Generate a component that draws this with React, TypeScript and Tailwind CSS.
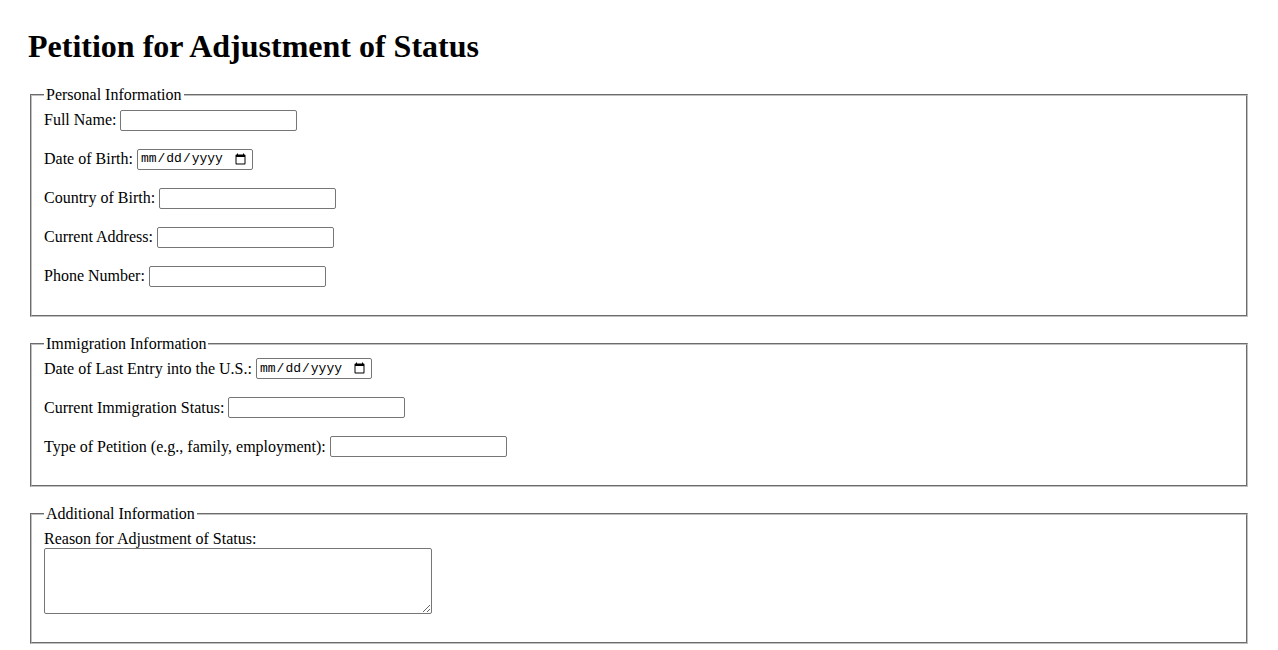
const serif = "font-['Liberation_Serif','Times_New_Roman',serif]";

const textInput =
  "h-[21px] w-[177px] rounded-[2px] border border-[#767676] bg-white px-[2px] text-[13.33px] font-['Liberation_Sans',Arial,sans-serif]";

const dateInput =
  "h-[21px] w-[116px] rounded-[2px] border border-[#767676] bg-white pl-[2px] pr-[3px] text-[13px] text-black font-['Liberation_Mono','Courier_New',monospace]";

type Field = { label: string; type: "text" | "date" };

function Row({ label, type }: Field) {
  return (
    <div className="mb-[18px] flex h-[21px] items-center">
      <label className="mr-[4px] whitespace-nowrap">{label}</label>
      <input type={type} className={type === "date" ? dateInput : textInput} />
    </div>
  );
}

function Section({
  title,
  children,
}: {
  title: string;
  children: React.ReactNode;
}) {
  return (
    <fieldset className="mx-[2px] mb-[18px] border-2 border-[#c0c0c0] px-[12px] pt-[5.6px] pb-[10px] [border-style:groove]">
      <legend className="px-[2px] leading-[18px]">{title}</legend>
      {children}
    </fieldset>
  );
}

const personal: Field[] = [
  { label: "Full Name:", type: "text" },
  { label: "Date of Birth:", type: "date" },
  { label: "Country of Birth:", type: "text" },
  { label: "Current Address:", type: "text" },
  { label: "Phone Number:", type: "text" },
];

const immigration: Field[] = [
  { label: "Date of Last Entry into the U.S.:", type: "date" },
  { label: "Current Immigration Status:", type: "text" },
  { label: "Type of Petition (e.g., family, employment):", type: "text" },
];

export default function App() {
  return (
    <div className={`min-h-screen bg-white px-[28px] pt-[28px] text-[16px] text-black ${serif}`}>
      <h1 className="mb-[21px] text-[32px] font-bold leading-[37px]">
        Petition for Adjustment of Status
      </h1>

      <form>
        <Section title="Personal Information">
          {personal.map((f) => (
            <Row key={f.label} {...f} />
          ))}
        </Section>

        <Section title="Immigration Information">
          {immigration.map((f) => (
            <Row key={f.label} {...f} />
          ))}
        </Section>

        <Section title="Additional Information">
          <label className="block leading-[19px]">
            Reason for Adjustment of Status:
          </label>
          <textarea className="mb-[18px] block h-[66px] w-[388px] rounded-[2px] border border-[#767676] bg-white text-[13.33px]" />
        </Section>
      </form>
    </div>
  );
}
